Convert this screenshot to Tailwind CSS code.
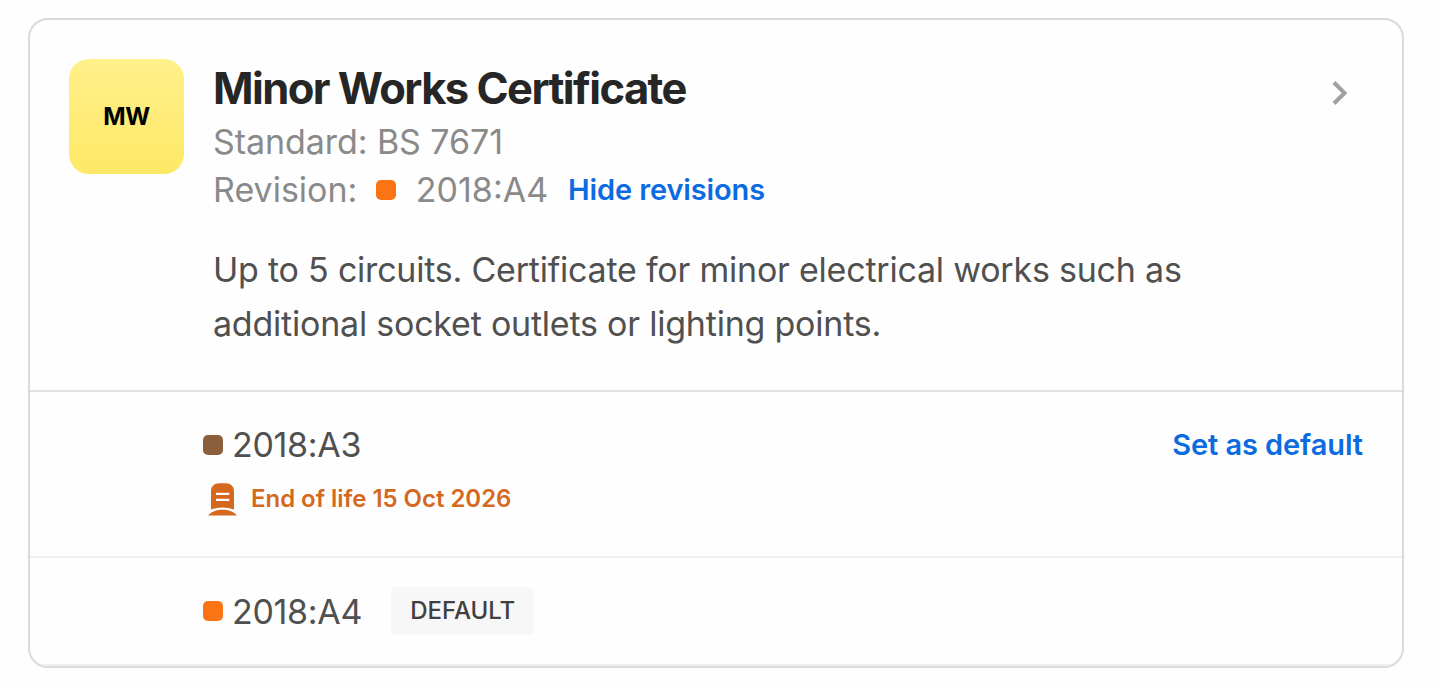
<!DOCTYPE html>
<html lang="en">
<head>
  <meta charset="UTF-8" />
  <meta name="viewport" content="width=device-width, initial-scale=1" />
  <title>Minor Works Certificate</title>
  <script src="https://cdn.jsdelivr.net/npm/@tailwindcss/browser@4"></script>
</head>
<body class="bg-[#fefefe] font-['Inter',sans-serif] h-[685px] overflow-hidden px-7 pt-[18px]">

  <!-- Certificate card -->
  <article class="w-[1376px] h-[650px] border-2 border-[#dadada] rounded-[20px] overflow-hidden flex flex-col">

    <!-- Summary -->
    <section class="h-[372px] shrink-0 border-b-2 border-[#e2e2e2] flex items-start pl-[39px] pr-[54px] pt-[39px]">
      <div class="size-[115px] shrink-0 rounded-[20px] bg-linear-to-b from-[#fff08a] to-[#fde966] flex items-center justify-center text-2xl tracking-[-0.4px] font-bold text-black">MW</div>
      <div class="ml-[29px] flex-1">
        <h1 class="text-[43.5px] leading-[54px] mt-0.5 font-bold tracking-[-1.55px] text-[#262626] whitespace-nowrap">Minor Works Certificate</h1>
        <p class="text-[34px] leading-[48px] mt-[3px] tracking-[-0.07px] text-[#8a8a8a]">Standard: BS 7671</p>
        <div class="flex items-center text-[34px] leading-[48px] text-[#8a8a8a]">
          <span>Revision:</span>
          <span class="size-5 rounded-[5px] bg-[#fb7414] ml-[19px]"></span>
          <span class="ml-[19.5px]">2018:A4</span>
          <a href="#" class="ml-5 text-[29px] tracking-[-0.13px] font-semibold text-[#0c6be0]">Hide revisions</a>
        </div>
        <p class="mt-[29px] text-[34px] leading-[54px] tracking-[-0.22px] text-[#505050]">Up to 5 circuits. Certificate for minor electrical works such as<br />additional socket outlets or lighting points.</p>
      </div>
      <svg class="mt-[21px] w-4 h-[26px] shrink-0" viewBox="0 0 16 26" fill="none" stroke="#a0a0a0" stroke-width="4">
        <path d="M2 2.5 12.5 13 2 23.5" />
      </svg>
    </section>

    <!-- Revision 2018:A3 -->
    <section class="h-[166px] shrink-0 border-b-2 border-[#f0f0f0] flex items-start justify-between pl-[173px] pr-[39px] pt-[29px]">
      <div>
        <div class="flex items-center text-[34px] leading-[48px] tracking-[-0.3px] text-[#505050]">
          <span class="size-5 rounded-[5px] bg-[#8b5e3c] mr-[9px]"></span>
          <span>2018:A3</span>
        </div>
        <div class="flex items-center mt-[11px] ml-[5px] h-[38px] text-[24px] font-semibold text-[#d4691e]">
          <svg class="w-[29px] h-[33px] mr-3.5" viewBox="0 0 29 33" fill="currentColor">
            <path fill-rule="evenodd" d="M3 8C3 3.500 6.500 0.300 11 0.300h7c4.500 0 8 3.200 8 7.700V26.600C18.500 23.800 10.500 23.800 3 26.600zM8 9.700v2.300h13.300V9.700zM8 15.700v2.300h13.300v-2.300z" />
            <path d="M0 32.500C6 24.800 23 24.800 29 32.500z" />
          </svg>
          <span class="tracking-[-0.03px]">End of life 15 Oct 2026</span>
        </div>
      </div>
      <a href="#" class="text-[29px] leading-[48px] tracking-[-0.1px] font-semibold text-[#0c6be0]">Set as default</a>
    </section>

    <!-- Revision 2018:A4 -->
    <section class="flex-1 border-b-2 border-[#f0f0f0] flex items-start pl-[173px] pt-[29px]">
      <div class="flex items-center h-12 text-[34px] tracking-[-0.3px] text-[#505050]">
        <span class="size-5 rounded-[5px] bg-[#fb7414] mr-[9px]"></span>
        <span>2018:A4</span>
        <span class="ml-[29px] w-[143px] h-12 rounded-[5px] bg-[#f7f7f7] text-2xl tracking-normal font-medium text-[#404040] flex items-center justify-center">DEFAULT</span>
      </div>
    </section>

  </article>

</body>
</html>
